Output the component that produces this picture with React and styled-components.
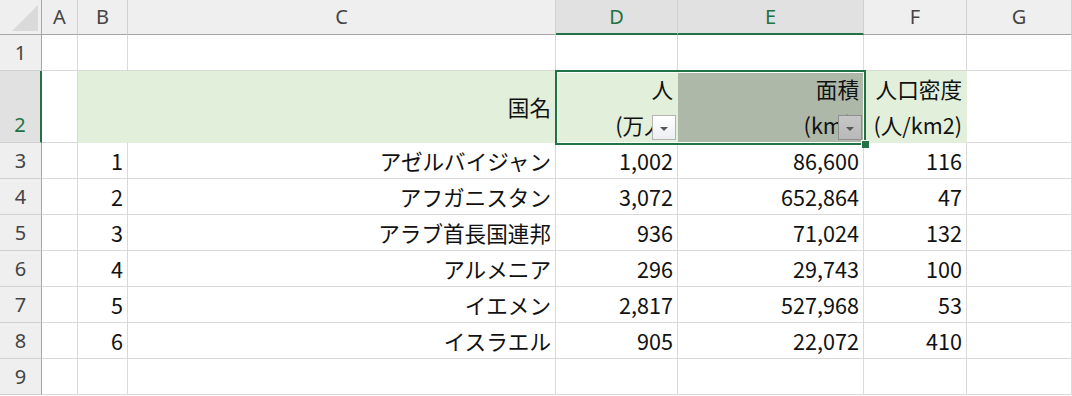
import React from 'react';
import styled, { createGlobalStyle } from 'styled-components';

const GREEN = '#217346';
const FILL = '#e2efda';
const SHADE = '#aeb8a9';
const GRID = '#d9d9d9';

const GlobalStyle = createGlobalStyle`
  html, body {
    margin: 0;
    padding: 0;
    background: #fff;
  }
  * {
    box-sizing: border-box;
  }
`;

const Sheet = styled.div`
  position: relative;
  width: 1072px;
  height: 396px;
  overflow: hidden;
  display: grid;
  grid-template-columns: 42px 36px 50px 428px 122px 186px 103px 105px;
  grid-template-rows: 35px 36px 72px repeat(7, 36px);
  font-family: 'Noto Sans CJK JP', 'Noto Sans', sans-serif;
  background: #fff;
`;

const Corner = styled.div`
  background: #efefef;
  border-right: 1px solid #a6a6a6;
  border-bottom: 1px solid #a6a6a6;
  display: flex;
  align-items: stretch;
`;

const ColHeader = styled.div`
  background: ${(p) => (p.$selected ? '#e1e1e1' : '#efefef')};
  border-right: 1px solid #d0d0d0;
  border-bottom: ${(p) => (p.$selected ? `2px solid ${GREEN}` : '1px solid #a6a6a6')};
  display: flex;
  align-items: center;
  justify-content: center;
  font-family: 'Noto Sans', 'Liberation Sans', sans-serif;
  font-size: 20px;
  color: ${(p) => (p.$selected ? GREEN : '#444')};
  padding-bottom: ${(p) => (p.$selected ? '0' : '1px')};
`;

const RowHeader = styled.div`
  background: ${(p) => (p.$selected ? '#e1e1e1' : '#efefef')};
  border-bottom: 1px solid #d0d0d0;
  border-right: ${(p) => (p.$selected ? `2px solid ${GREEN}` : '1px solid #a6a6a6')};
  display: flex;
  align-items: flex-end;
  justify-content: center;
  line-height: 35px;
  font-family: 'Noto Sans', 'Liberation Sans', sans-serif;
  font-size: 20px;
  color: ${(p) => (p.$selected ? GREEN : '#444')};
`;

const Cell = styled.div`
  position: relative;
  background: ${(p) => p.$bg || '#fff'};
  border-right: 1px solid ${(p) => p.$bg || GRID};
  border-bottom: 1px solid ${(p) => p.$bg || GRID};
  display: flex;
  flex-direction: column;
  justify-content: center;
  align-items: flex-end;
  padding-right: 4px;
  font-size: 21.6px;
  line-height: 35px;
  color: #111;
  white-space: nowrap;
`;

const Line = styled.span`
  display: block;
  height: 36px;
`;

const FilterButton = styled.div`
  position: absolute;
  right: 1px;
  bottom: 2px;
  width: 24px;
  height: 25px;
  z-index: 3;
  border: 1px solid ${(p) => (p.$dark ? '#8e8e8e' : '#b4b4b4')};
  background: ${(p) =>
    p.$dark
      ? 'linear-gradient(#c6c6c6, #b9b9b9)'
      : 'linear-gradient(#ffffff, #eceef3)'};
  display: flex;
  align-items: center;
  justify-content: center;
`;

const Arrow = styled.span`
  width: 0;
  height: 0;
  border-left: 4px solid transparent;
  border-right: 4px solid transparent;
  border-top: 4px solid #555;
  margin-top: 2px;
`;

const Selection = styled.div`
  position: absolute;
  left: 555px;
  top: 70px;
  width: 311px;
  height: 75px;
  border: 2px solid ${GREEN};
  box-shadow: inset 0 0 0 1px #fff;
  pointer-events: none;
  z-index: 4;
`;

const FillHandle = styled.div`
  position: absolute;
  right: -5px;
  bottom: -5px;
  width: 8px;
  height: 8px;
  background: ${GREEN};
  border-left: 1px solid #fff;
  border-top: 1px solid #fff;
`;

const columns = ['A', 'B', 'C', 'D', 'E', 'F', 'G'];
const selectedCols = ['D', 'E'];

const rows = [
  ['1', 'アゼルバイジャン', '1,002', '86,600', '116'],
  ['2', 'アフガニスタン', '3,072', '652,864', '47'],
  ['3', 'アラブ首長国連邦', '936', '71,024', '132'],
  ['4', 'アルメニア', '296', '29,743', '100'],
  ['5', 'イエメン', '2,817', '527,968', '53'],
  ['6', 'イスラエル', '905', '22,072', '410'],
];

function Filter({ dark }) {
  return (
    <FilterButton $dark={dark}>
      <Arrow />
    </FilterButton>
  );
}

export default function App() {
  return (
    <>
      <GlobalStyle />
      <Sheet>
        <Corner>
          <svg width="41" height="34" viewBox="0 0 41 34">
            <polygon points="12,31 38,31 38,5" fill="#dadada" />
          </svg>
        </Corner>
        {columns.map((c) => (
          <ColHeader key={c} $selected={selectedCols.includes(c)}>
            {c}
          </ColHeader>
        ))}

        <RowHeader>1</RowHeader>
        {columns.map((c) => (
          <Cell key={c} />
        ))}

        <RowHeader $selected>2</RowHeader>
        <Cell />
        <Cell $bg={FILL} />
        <Cell $bg={FILL}>国名</Cell>
        <Cell $bg={FILL}>
          <Line>人</Line>
          <Line>(万人)</Line>
          <Filter />
        </Cell>
        <Cell $bg={SHADE}>
          <Line>面積</Line>
          <Line>(km²)</Line>
          <Filter dark />
        </Cell>
        <Cell $bg={FILL}>
          <Line>人口密度</Line>
          <Line>(人/km2)</Line>
        </Cell>
        <Cell />

        {rows.map((r, i) => (
          <React.Fragment key={i}>
            <RowHeader>{i + 3}</RowHeader>
            <Cell />
            {r.map((v, j) => (
              <Cell key={j}>{v}</Cell>
            ))}
            <Cell />
          </React.Fragment>
        ))}

        <RowHeader>9</RowHeader>
        {columns.map((c) => (
          <Cell key={c} />
        ))}

        <Selection>
          <FillHandle />
        </Selection>
      </Sheet>
    </>
  );
}
